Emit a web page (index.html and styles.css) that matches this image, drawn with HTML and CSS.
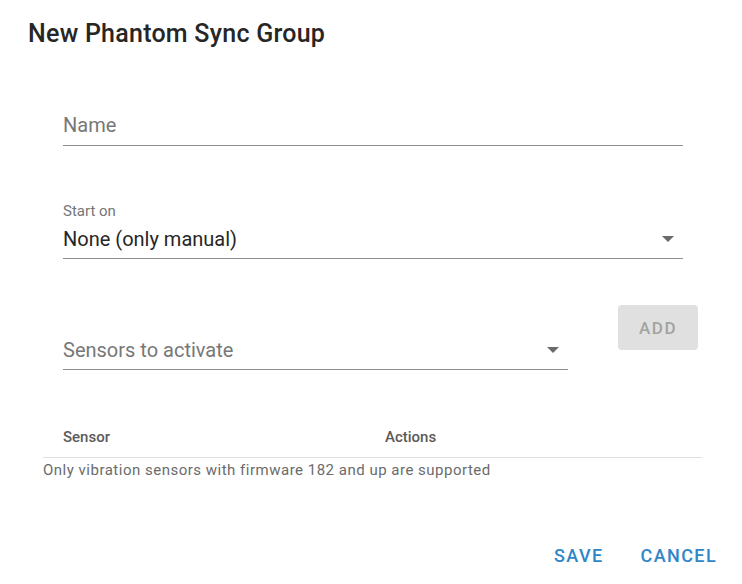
FILE: index.html
```html
<!DOCTYPE html>
<html>
<head>
<meta charset="utf-8">
<link rel="stylesheet" href="styles.css">
</head>
<body>
<div class="dialog">
  <h2 class="title">New Phantom Sync Group</h2>
  <div class="content">
    <div class="field field-name">
      <div class="input-row"><span class="placeholder">Name</span></div>
    </div>
    <div class="field field-start">
      <label class="shrink-label">Start on</label>
      <div class="input-row select-row"><span class="value">None (only manual)</span><span class="arrow"></span></div>
    </div>
    <div class="sensor-line">
      <div class="field field-sensors">
        <div class="input-row select-row"><span class="placeholder">Sensors to activate</span><span class="arrow"></span></div>
      </div>
      <button class="add-btn" disabled>ADD</button>
    </div>
    <div class="table">
      <div class="thead">
        <div class="th th-sensor">Sensor</div>
        <div class="th th-actions">Actions</div>
      </div>
    </div>
    <p class="note">Only vibration sensors with firmware 182 and up are supported</p>
  </div>
  <div class="actions">
    <button class="text-btn">SAVE</button>
    <button class="text-btn">CANCEL</button>
  </div>
</div>
</body>
</html>
```
FILE: styles.css
```css
html, body {
  margin: 0;
  padding: 0;
  background: #ffffff;
}
body {
  font-family: Roboto, "Liberation Sans", sans-serif;
  width: 742px;
  height: 584px;
  overflow: hidden;
}
.dialog {
  width: 742px;
  height: 584px;
  display: flex;
  flex-direction: column;
}
.title {
  margin: 20px 0 0 28px;
  font-size: 25px;
  line-height: 28px;
  font-weight: 500;
  color: #262626;
  letter-spacing: 0.25px;
}
.content {
  padding: 0 39px 0 43px;
  flex: 1;
}
.field {
  margin-left: 20px;
  width: 620px;
}
.input-row {
  height: 39px;
  border-bottom: 1px solid #8e8e8e;
  display: flex;
  align-items: center;
  justify-content: space-between;
  font-size: 20px;
  letter-spacing: 0;
}
.field-name {
  margin-top: 57px;
}
.field-name .input-row {
  height: 40px;
}
.placeholder {
  color: #777777;
}
.value {
  color: #262626;
}
.field-start {
  margin-top: 58px;
}
.shrink-label {
  display: block;
  font-size: 15px;
  line-height: 15px;
  color: #767676;
}
.field-start .input-row {
  height: 39px;
}
.arrow {
  width: 0;
  height: 0;
  border-left: 6px solid transparent;
  border-right: 6px solid transparent;
  border-top: 6px solid #6b6b6b;
  margin-right: 9px;
}
.sensor-line {
  margin-top: 46px;
  display: flex;
  align-items: flex-start;
}
.field-sensors {
  width: 505px;
  margin-top: 25px;
}
.field-sensors .input-row {
  height: 39px;
}
.add-btn {
  margin-left: 50px;
  width: 80px;
  height: 45px;
  border: none;
  border-radius: 4px;
  background: #e0e0e0;
  color: #a3a3a3;
  font-family: Roboto, "Liberation Sans", sans-serif;
  font-size: 17px;
  font-weight: 500;
  letter-spacing: 1.5px;
  padding: 0;
}
.table {
  margin-top: 47px;
}
.thead {
  display: flex;
  height: 40px;
  align-items: center;
  border-bottom: 1px solid #e0e0e0;
  width: 659px;
}
.th {
  font-size: 15px;
  font-weight: 500;
  color: #5a5a5a;
}
.th-sensor {
  padding-left: 20px;
  width: 322px;
}
.note {
  margin: 3px 0 0 0;
  font-size: 15px;
  line-height: 18px;
  color: #6b6b6b;
  letter-spacing: 0.5px;
}
.actions {
  display: flex;
  justify-content: flex-end;
  gap: 37px;
  padding: 0 25px 18px 0;
}
.text-btn {
  border: none;
  background: transparent;
  padding: 0;
  font-family: Roboto, "Liberation Sans", sans-serif;
  font-size: 18px;
  font-weight: 500;
  letter-spacing: 1.4px;
  color: #2f86c8;
  line-height: 20px;
}
```
